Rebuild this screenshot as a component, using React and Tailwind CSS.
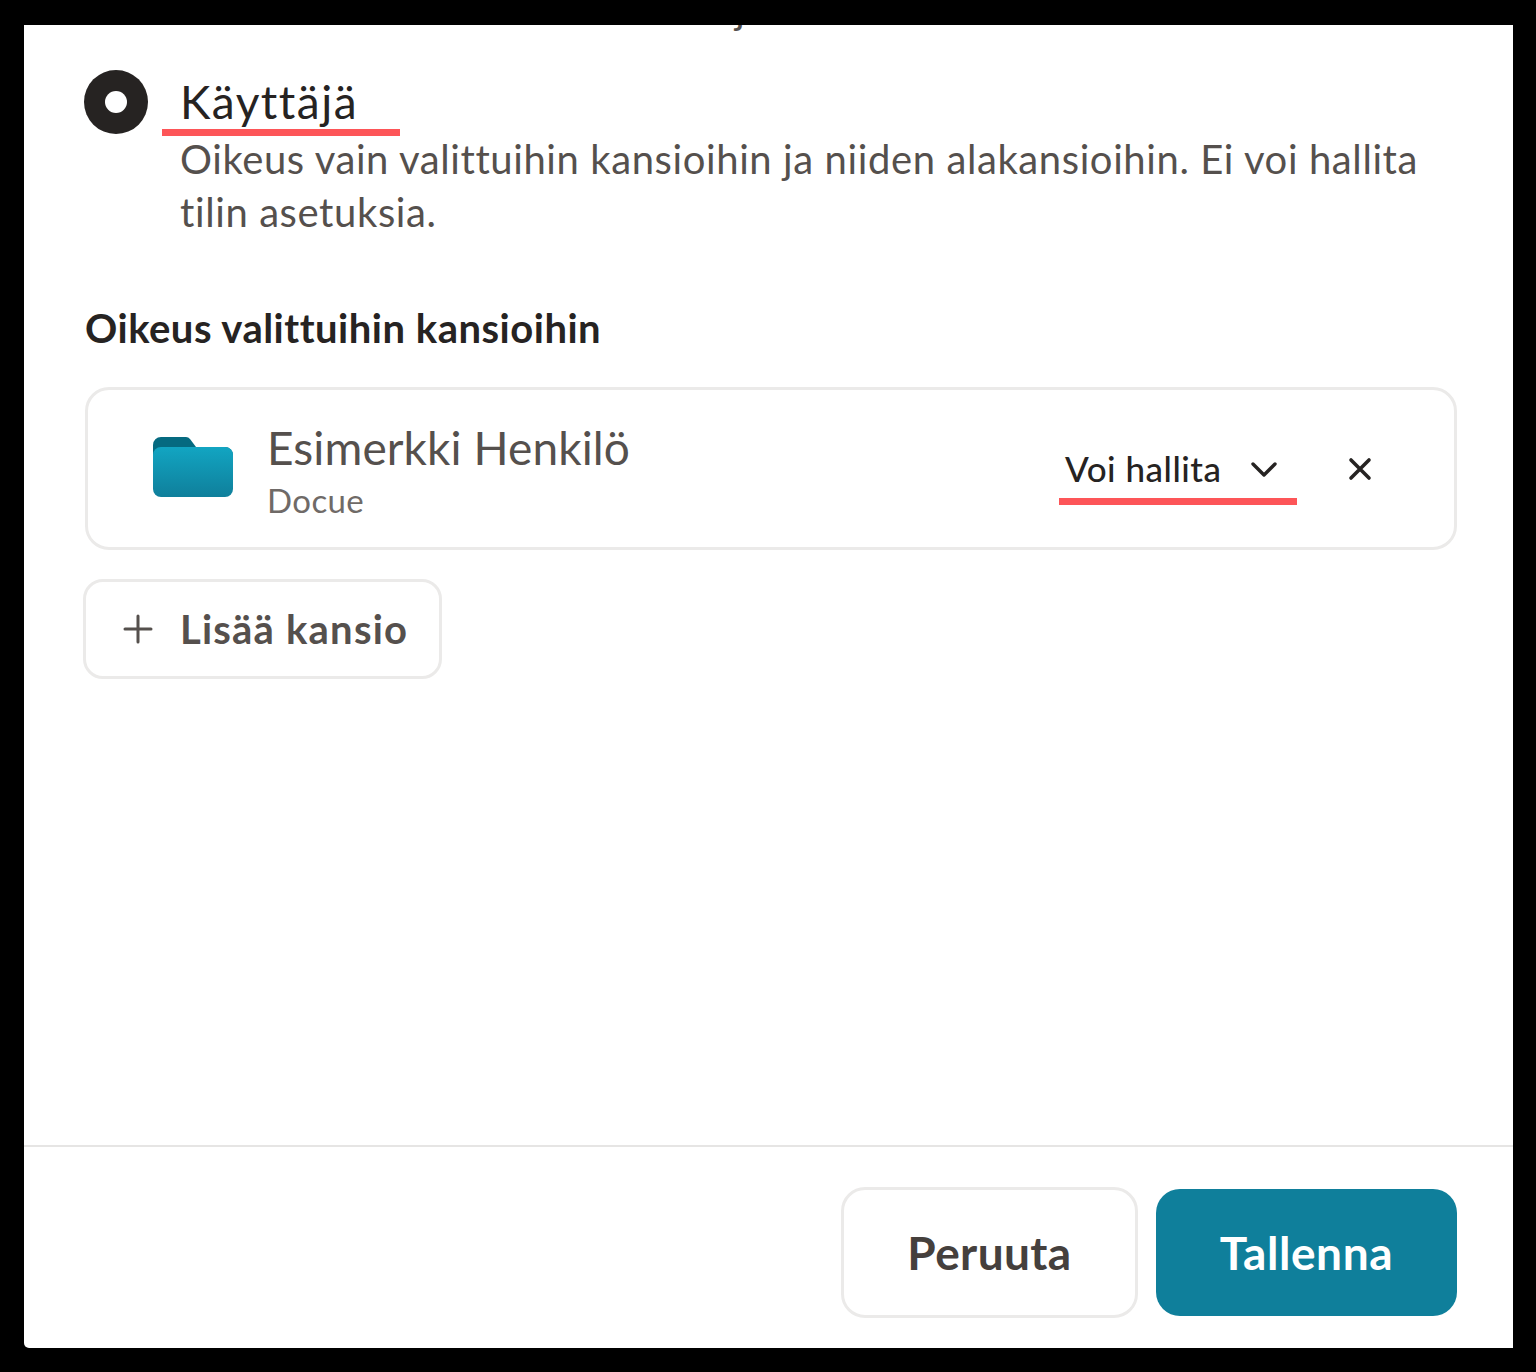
function Folder() {
  return (
    <svg width="80" height="62" viewBox="0 0 80 62" className="shrink-0 mb-[4px]">
      <defs>
        <linearGradient id="fg" x1="0" y1="0" x2="0" y2="1">
          <stop offset="0" stopColor="#12a5c2" />
          <stop offset="1" stopColor="#0f7f9b" />
        </linearGradient>
      </defs>
      <path d="M0 9a8 8 0 0 1 8-8h25a5 5 0 0 1 4 2l6 8h29a8 8 0 0 1 8 8v20H0z" fill="#056a80" />
      <path d="M0 19a8 8 0 0 1 8-8h64a8 8 0 0 1 8 8v34a8 8 0 0 1-8 8H8a8 8 0 0 1-8-8z" fill="url(#fg)" />
    </svg>
  );
}

export default function App() {
  return (
    <div className="w-[1536px] h-[1372px] bg-black pt-[25px] pl-[24px] font-['Lato','Liberation_Sans',sans-serif]">
      <div className="w-[1489px] h-[1323px] bg-white rounded-bl-[5px] flex flex-col overflow-hidden">
        <div className="h-[7px] overflow-hidden pl-[156px] shrink-0">
          <div className="-mt-[42px] text-[40px] leading-[53px] tracking-[0.6px] text-[#55504d] whitespace-nowrap">Oikeus tilin kaikkiin kansioihin ja tietoihin.</div>
        </div>
        <div className="flex-1 pl-[61px] pr-[56px] pt-[38px]">
          <div className="flex items-start -ml-[1px]">
            <div className="w-[64px] h-[64px] rounded-full bg-[#262322] flex items-center justify-center shrink-0">
              <div className="w-[22px] h-[22px] rounded-full bg-white" />
            </div>
            <div className="ml-[14px] relative flex-1">
              <div className="pl-[18px] h-[63px] pt-[6px] text-[46px] leading-[52px] tracking-[1.5px] text-[#262322]">Käyttäjä</div>
              <div className="absolute left-0 top-[59px] w-[238px] h-[7px] bg-[#fd5558]" />
              <p className="pl-[18px] pr-[30px] text-[40px] leading-[53px] tracking-[0.6px] text-[#55504d]">
                Oikeus vain valittuihin kansioihin ja niiden alakansioihin. Ei voi hallita tilin asetuksia.
              </p>
            </div>
          </div>
          <h2 className="mt-[63px] text-[40px] leading-[52px] tracking-[0.5px] font-bold text-[#262322]">Oikeus valittuihin kansioihin</h2>
          <div className="mt-[33px] h-[163px] border-[3px] border-[#ebeae9] rounded-[24px] flex items-center pl-[65px] pr-[82px]">
            <Folder />
            <div className="ml-[34px] flex-1 pt-[2px]">
              <div className="text-[46px] leading-[56px] tracking-[0.1px] text-[#55504d]">Esimerkki Henkilö</div>
              <div className="text-[33px] leading-[40px] tracking-[0.4px] text-[#6f6a67] mt-[4px]">Docue</div>
            </div>
            <div className="relative w-[238px] h-[72px] flex items-center pl-[6px] pb-[2px] mr-[51px]">
              <span className="text-[35px] leading-[44px] tracking-[0.5px] font-medium text-[#262322]">Voi hallita</span>
              <svg width="28" height="18" viewBox="0 0 28 18" className="ml-[29px] mt-[4px]" fill="none" stroke="#262322" strokeWidth="3.4" strokeLinecap="round" strokeLinejoin="round"><path d="M3 3l11 11L25 3" /></svg>
              <div className="absolute left-0 bottom-0 w-[238px] h-[7px] bg-[#fd5558]" />
            </div>
            <svg width="24" height="24" viewBox="0 0 24 24" fill="none" stroke="#262322" strokeWidth="3.6" strokeLinecap="round"><path d="M3 3l18 18M21 3L3 21" /></svg>
          </div>
          <button className="mt-[29px] -ml-[2px] w-[359px] h-[100px] border-[3px] border-[#ebeae9] rounded-[20px] flex items-center pl-[37px]">
            <svg width="30" height="30" viewBox="0 0 30 30" fill="none" stroke="#55504d" strokeWidth="3" strokeLinecap="round"><path d="M15 2v26M2 15h26" /></svg>
            <span className="ml-[27px] text-[40px] leading-[48px] tracking-[1.2px] font-bold text-[#55504d]">Lisää kansio</span>
          </button>
        </div>
        <div className="h-[203px] border-t-[2px] border-[#e6e5e4] flex justify-end items-start pr-[56px] pt-[40px] gap-[18px]">
          <button className="w-[297px] h-[131px] border-[3px] border-[#ebeae9] rounded-[24px] text-[46px] tracking-[0.4px] font-bold text-[#45403d]">Peruuta</button>
          <button className="w-[301px] h-[127px] mt-[2px] rounded-[24px] bg-[#0f7f9b] text-[46px] tracking-[0.6px] font-bold text-white">Tallenna</button>
        </div>
      </div>
    </div>
  );
}
